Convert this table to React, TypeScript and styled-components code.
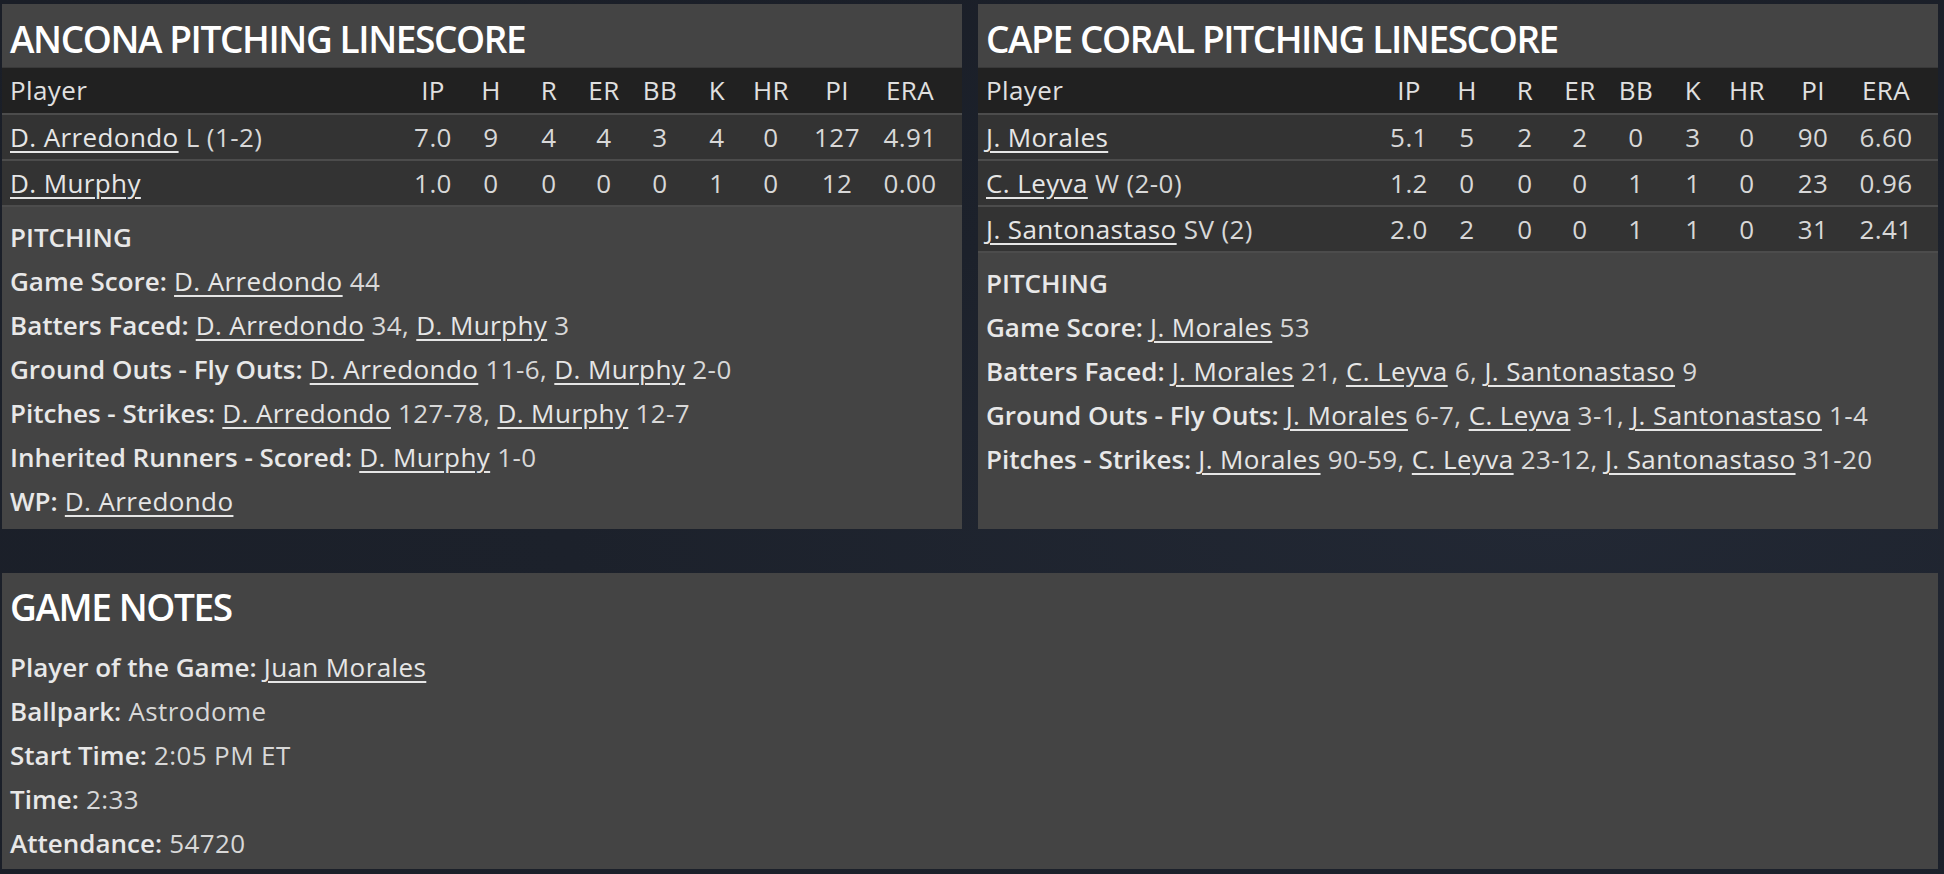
import React from 'react';
import styled, { createGlobalStyle } from 'styled-components';

interface PitcherLine {
  name: string;
  note?: string;
  stats: string[];
}

interface NotePart {
  link?: string;
  text?: string;
}

interface NoteLine {
  label: string;
  parts: NotePart[];
}

interface TeamLinescore {
  team: string;
  pitchers: PitcherLine[];
  notes: NoteLine[];
}

const COLUMNS = ['IP', 'H', 'R', 'ER', 'BB', 'K', 'HR', 'PI', 'ERA'];

const TEAMS: TeamLinescore[] = [
  {
    team: 'ANCONA',
    pitchers: [
      { name: 'D. Arredondo', note: 'L (1-2)', stats: ['7.0', '9', '4', '4', '3', '4', '0', '127', '4.91'] },
      { name: 'D. Murphy', stats: ['1.0', '0', '0', '0', '0', '1', '0', '12', '0.00'] },
    ],
    notes: [
      { label: 'Game Score:', parts: [{ link: 'D. Arredondo' }, { text: ' 44' }] },
      {
        label: 'Batters Faced:',
        parts: [{ link: 'D. Arredondo' }, { text: ' 34, ' }, { link: 'D. Murphy' }, { text: ' 3' }],
      },
      {
        label: 'Ground Outs - Fly Outs:',
        parts: [{ link: 'D. Arredondo' }, { text: ' 11-6, ' }, { link: 'D. Murphy' }, { text: ' 2-0' }],
      },
      {
        label: 'Pitches - Strikes:',
        parts: [{ link: 'D. Arredondo' }, { text: ' 127-78, ' }, { link: 'D. Murphy' }, { text: ' 12-7' }],
      },
      { label: 'Inherited Runners - Scored:', parts: [{ link: 'D. Murphy' }, { text: ' 1-0' }] },
      { label: 'WP:', parts: [{ link: 'D. Arredondo' }] },
    ],
  },
  {
    team: 'CAPE CORAL',
    pitchers: [
      { name: 'J. Morales', stats: ['5.1', '5', '2', '2', '0', '3', '0', '90', '6.60'] },
      { name: 'C. Leyva', note: 'W (2-0)', stats: ['1.2', '0', '0', '0', '1', '1', '0', '23', '0.96'] },
      { name: 'J. Santonastaso', note: 'SV (2)', stats: ['2.0', '2', '0', '0', '1', '1', '0', '31', '2.41'] },
    ],
    notes: [
      { label: 'Game Score:', parts: [{ link: 'J. Morales' }, { text: ' 53' }] },
      {
        label: 'Batters Faced:',
        parts: [
          { link: 'J. Morales' },
          { text: ' 21, ' },
          { link: 'C. Leyva' },
          { text: ' 6, ' },
          { link: 'J. Santonastaso' },
          { text: ' 9' },
        ],
      },
      {
        label: 'Ground Outs - Fly Outs:',
        parts: [
          { link: 'J. Morales' },
          { text: ' 6-7, ' },
          { link: 'C. Leyva' },
          { text: ' 3-1, ' },
          { link: 'J. Santonastaso' },
          { text: ' 1-4' },
        ],
      },
      {
        label: 'Pitches - Strikes:',
        parts: [
          { link: 'J. Morales' },
          { text: ' 90-59, ' },
          { link: 'C. Leyva' },
          { text: ' 23-12, ' },
          { link: 'J. Santonastaso' },
          { text: ' 31-20' },
        ],
      },
    ],
  },
];

const GAME_NOTES: NoteLine[] = [
  { label: 'Player of the Game:', parts: [{ link: 'Juan Morales' }] },
  { label: 'Ballpark:', parts: [{ text: 'Astrodome' }] },
  { label: 'Start Time:', parts: [{ text: '2:05 PM ET' }] },
  { label: 'Time:', parts: [{ text: '2:33' }] },
  { label: 'Attendance:', parts: [{ text: '54720' }] },
];

const GlobalStyle = createGlobalStyle`
  html, body {
    margin: 0;
    padding: 0;
  }
  body {
    min-height: 874px;
    background: radial-gradient(ellipse at 80% 60%, #222834 0%, #1c212b 45%, #1a1e27 100%);
    font-family: 'Open Sans', 'Noto Sans', sans-serif;
    color: #dedede;
  }
`;

const PAGE = styled.div`
  display: flex;
  flex-direction: column;
  gap: 44px;
  padding: 4px 6px 0 2px;
`;

const TOP_ROW = styled.div`
  display: grid;
  grid-template-columns: 960px 960px;
  gap: 16px;
`;

const PANEL = styled.section`
  display: flex;
  flex-direction: column;
  background: #444444;
`;

const TITLE = styled.h2`
  margin: 0;
  padding: 11px 8px 5px;
  font-size: 37px;
  line-height: 47px;
  font-weight: 600;
  letter-spacing: -1.4px;
  color: #ffffff;
`;

const GRID_COLUMNS = '1fr 58px 58px 58px 52px 60px 54px 54px 78px 68px';

const HEAD_ROW = styled.div`
  display: grid;
  grid-template-columns: ${GRID_COLUMNS};
  padding: 0 18px 0 8px;
  height: 46px;
  line-height: 44px;
  background: #212121;
  border-top: 1px solid #393939;
  box-sizing: border-box;
  font-size: 26px;
  letter-spacing: 0.4px;
  color: #e0e0e0;
`;

const ROW = styled(HEAD_ROW)`
  background: #333333;
  border-top: 2px solid #4c4c4c;
  color: #d8d8d8;
`;

const CELL = styled.span<{ $left?: boolean }>`
  text-align: ${(p) => (p.$left ? 'left' : 'center')};
  white-space: nowrap;
`;

const LINK = styled.a`
  color: #e6e6e6;
  text-decoration: underline;
  text-decoration-thickness: 2px;
  text-underline-offset: 4px;
  cursor: pointer;
`;

const SECTION = styled.div<{ $divider?: boolean }>`
  flex: 1;
  padding: 8px 8px 6px;
  border-top: ${(p) => (p.$divider ? '2px solid #4c4c4c' : 'none')};
  font-size: 26px;
  letter-spacing: 0.4px;
  line-height: 44px;
  color: #d8d8d8;
`;

const NOTES_SECTION = styled(SECTION)`
  padding: 15px 8px 4px;
`;

const LINE = styled.div`
  white-space: nowrap;
`;

const LABEL = styled.b`
  font-weight: 600;
  letter-spacing: 0;
  color: #e8e8e8;
`;

const BOTTOM_PANEL = styled(PANEL)`
  width: 1936px;
  height: 296px;
`;

const BOTTOM_TITLE = styled(TITLE)`
  padding: 10px 8px 0;
`;

function Note({ line }: { line: NoteLine }) {
  return (
    <LINE>
      <LABEL>{line.label}</LABEL>{' '}
      {line.parts.map((part, i) =>
        part.link ? <LINK key={i}>{part.link}</LINK> : <span key={i}>{part.text}</span>
      )}
    </LINE>
  );
}

function Linescore({ data }: { data: TeamLinescore }) {
  return (
    <PANEL>
      <TITLE>{data.team} PITCHING LINESCORE</TITLE>
      <HEAD_ROW>
        <CELL $left>Player</CELL>
        {COLUMNS.map((c) => (
          <CELL key={c}>{c}</CELL>
        ))}
      </HEAD_ROW>
      {data.pitchers.map((p) => (
        <ROW key={p.name}>
          <CELL $left>
            <LINK>{p.name}</LINK>
            {p.note ? ` ${p.note}` : ''}
          </CELL>
          {p.stats.map((s, i) => (
            <CELL key={i}>{s}</CELL>
          ))}
        </ROW>
      ))}
      <SECTION $divider>
        <LINE>
          <LABEL>PITCHING</LABEL>
        </LINE>
        {data.notes.map((n) => (
          <Note key={n.label} line={n} />
        ))}
      </SECTION>
    </PANEL>
  );
}

export default function App() {
  return (
    <>
      <GlobalStyle />
      <PAGE>
        <TOP_ROW>
          {TEAMS.map((t) => (
            <Linescore key={t.team} data={t} />
          ))}
        </TOP_ROW>
        <BOTTOM_PANEL>
          <BOTTOM_TITLE>GAME NOTES</BOTTOM_TITLE>
          <NOTES_SECTION>
            {GAME_NOTES.map((n) => (
              <Note key={n.label} line={n} />
            ))}
          </NOTES_SECTION>
        </BOTTOM_PANEL>
      </PAGE>
    </>
  );
}
